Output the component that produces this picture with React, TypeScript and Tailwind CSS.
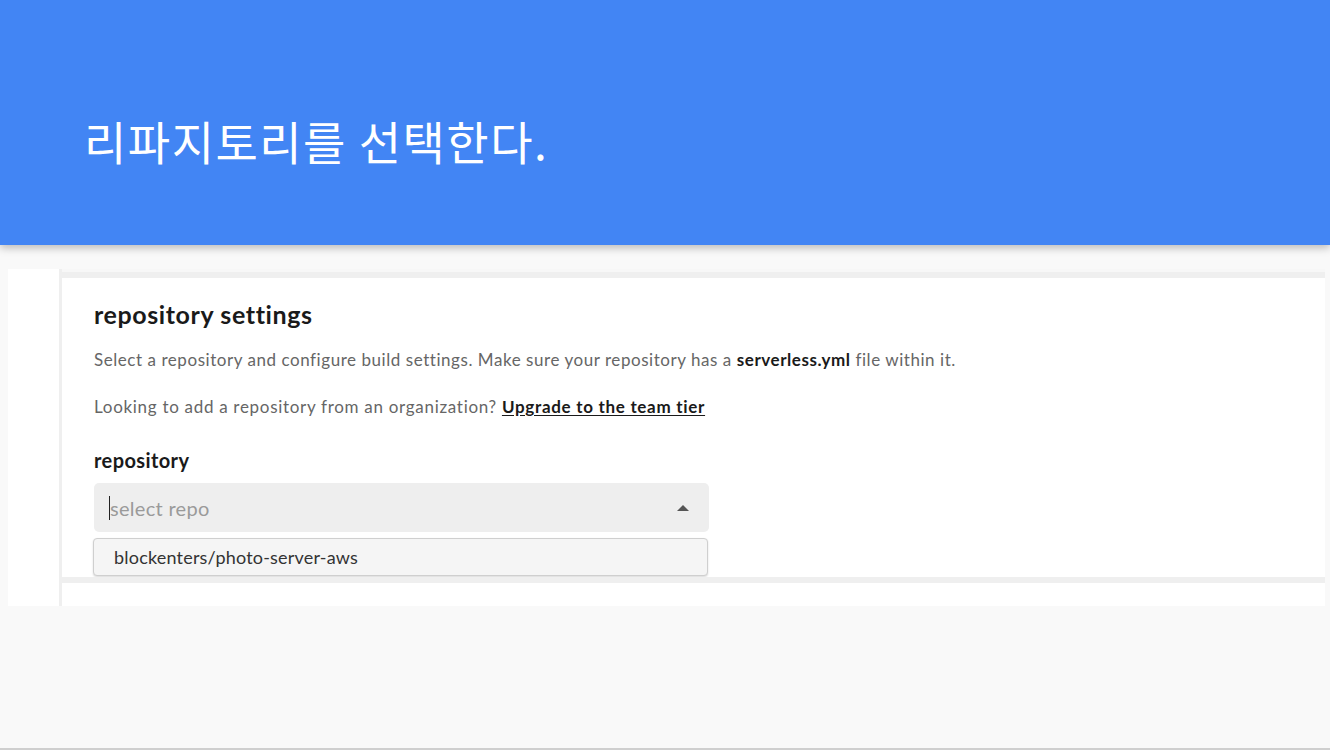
import React from 'react';

const App: React.FC = () => {
  return (
    <div className="w-[1330px] h-[750px] bg-[#f9f9f9] flex flex-col border-b-2 border-[#cfcfcf] overflow-hidden" style={{ fontFamily: 'Lato, "Noto Sans", sans-serif' }}>
      <div className="h-[245px] shrink-0 bg-[#4285f4] shadow-[0_3px_8px_rgba(0,0,0,0.25)] relative z-10 pl-[84px] pt-[111px]">
        <h1 className="text-white text-[46px] leading-[58px] font-normal tracking-[1.5px]" style={{ fontFamily: '"Noto Sans CJK KR", "Noto Sans", sans-serif' }}>
          리파지토리를 선택한다.
        </h1>
      </div>

      <div className="mt-[24px] ml-[8px] w-[1317px] h-[337px] flex bg-white">
        <div className="w-[51px] bg-white" />
        <div className="w-[3px] bg-[#efefef]" />
        <div className="flex-1 flex flex-col">
          <div className="h-[3px] bg-[#f7f7f7]" />
          <div className="h-[6px] bg-[#efefef]" />
          <div className="h-[299px] bg-white pl-[32px] pt-[20px] overflow-hidden">
            <h2 className="text-[25px] leading-[32px] font-bold text-[#1a1a1a] tracking-[0.6px]">repository settings</h2>
            <p className="mt-[18px] text-[17px] leading-[24px] text-[#666] tracking-[0.55px]">
              Select a repository and configure build settings. Make sure your repository has a{' '}
              <span className="font-bold text-[#1a1a1a]">serverless.yml</span> file within it.
            </p>
            <p className="mt-[23px] text-[17px] leading-[24px] text-[#666] tracking-[0.7px]">
              Looking to add a repository from an organization?{' '}
              <span className="font-bold text-[#1a1a1a] underline underline-offset-2">Upgrade to the team tier</span>
            </p>
            <div className="mt-[28px] text-[20px] leading-[26px] font-bold text-[#1a1a1a] tracking-[0.4px]">repository</div>
            <div className="mt-[10px] w-[615px] h-[49px] bg-[#eeeeee] rounded-[5px] flex items-center pl-[15px] pr-[20px]">
              <span className="w-px h-[24px] bg-[#222]" />
              <span className="text-[20px] text-[#9a9a9a] flex-1 tracking-[0.3px]">select repo</span>
              <svg width="12" height="6" viewBox="0 0 12 6"><path d="M0 6 L6 0 L12 6 Z" fill="#555" /></svg>
            </div>
            <div className="mt-[6px] -ml-px w-[615px] h-[38px] bg-[#f5f5f5] border border-[#cfcfcf] rounded-[4px] shadow-[0_1px_2px_rgba(0,0,0,0.15)] flex items-center pl-[20px]">
              <span className="text-[18px] text-[#333] tracking-[0.2px]">blockenters/photo-server-aws</span>
            </div>
          </div>
          <div className="h-[6px] bg-[#efefef]" />
          <div className="flex-1 bg-white" />
        </div>
      </div>
    </div>
  );
};

export default App;
